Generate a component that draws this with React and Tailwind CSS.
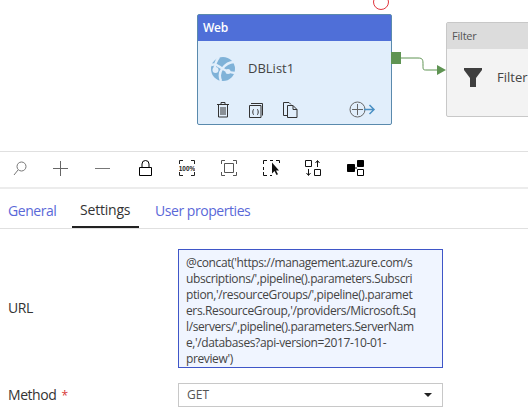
function Trash() {
  return <svg width="14" height="17" viewBox="0 0 14 17" fill="none" stroke="#333" strokeWidth="1"><path d="M1 3.500h12M5 3.500V1.500h4v2M2.500 3.500v12.500h9V3.500M5 6v8M7 6v8M9 6v8" /></svg>;
}
function Code() {
  return <svg width="15" height="16" viewBox="0 0 15 16" fill="none" stroke="#333" strokeWidth="1"><path d="M.5 3.500h11.500v12H.5zM2 1.500h11.500v12" /><path d="M5 7.500c-1 0-1 .5-1 1.500s-.5 1-.7 1c.2 0 .7 0 .7 1s0 1.500 1 1.500M8 7.500c1 0 1 .5 1 1.500s.5 1 .7 1c-.2 0-.7 0-.7 1s0 1.500-1 1.500" /></svg>;
}
function Copy() {
  return <svg width="15" height="16" viewBox="0 0 15 16" fill="none" stroke="#333" strokeWidth="1"><path d="M4 13.500H.5V.5h5.500l2 2" /><path d="M4.500 3.500h5.500l4 4v8H4.500zM10 3.500v4h4" /></svg>;
}
function AddArrow() {
  return <svg width="27" height="17" viewBox="0 0 27 17" fill="none"><circle cx="8.500" cy="8.500" r="7.500" stroke="#666" /><path d="M8.500 3v11M3 8.500h11" stroke="#666" /><path d="M15 8.500h10M20.500 4l4.500 4.500-4.500 4.500" stroke="#4a90c4" strokeWidth="1.500" /></svg>;
}
function Globe() {
  return <svg width="24" height="24" viewBox="0 0 24 24"><circle cx="12" cy="12" r="12" fill="#7fb2d8" /><path d="M0 8c6-2 8 2 12 4s6 4 12 4M8 0C5 4 3 9 4 14M23 5c-5 0-9 3-12 7s-3 7-1 12" stroke="#e1eefb" strokeWidth="2.400" fill="none" /><circle cx="4.500" cy="13" r="3" fill="#e1eefb" /><circle cx="17" cy="14.500" r="2.500" fill="#e1eefb" /></svg>;
}
const tools = [
  <svg className="ml-[2px]" width="14" height="15" viewBox="0 0 14 15" fill="none" stroke="#777"><circle cx="8.500" cy="5.500" r="4.500" /><path d="M5 9l-4 5" /></svg>,
  <svg width="15" height="15" viewBox="0 0 15 15" fill="none" stroke="#666"><path d="M7.500 0v15M0 7.500h15" /></svg>,
  <svg width="15" height="15" viewBox="0 0 15 15" fill="none" stroke="#777"><path d="M0 7.500h15" /></svg>,
  <svg className="ml-[2px]" width="13" height="16" viewBox="0 0 13 16" fill="none" stroke="#000"><path d="M.5 7.500h12v8H.5zM3 7.500V4a3.500 3.500 0 0 1 7 0v3.500" /></svg>,
  <svg width="16" height="16" viewBox="0 0 16 16" fill="none" stroke="#222"><path d="M.5 4V.5H4M12 .5h3.500V4M.5 12v3.500H4M12 15.500h3.500V12" /><text x="8" y="10.500" textAnchor="middle" fontSize="6.500" fontWeight="700" fill="#222" stroke="none" fontFamily="Liberation Sans">100%</text></svg>,
  <svg width="16" height="16" viewBox="0 0 16 16" fill="none" stroke="#555"><path d="M.5 4V.5H4M12 .5h3.500V4M.5 12v3.500H4M12 15.500h3.500V12" /><path d="M3.500 3.500h9v9h-9z" /></svg>,
  <svg width="17" height="16" viewBox="0 0 17 16" fill="none" stroke="#111"><path d="M.5 4V.5H4M7 .5h3M13 .5h3.500V3M.5 7v3M.5 12v3.500H4M7 15.500h2" strokeWidth="1" /><path d="M9 2.500v11l2.500-2.500 2 4 1.500-.8-2-3.800h3z" fill="#111" stroke="none" /></svg>,
  <svg width="16" height="16" viewBox="0 0 16 16" fill="none" stroke="#111"><path d="M.5.500h6v6h-6zM9.500 9.500h6v6h-6zM12.500 7V1M10.500 3l2-2.500 2 2.500M3.500 9v6M1.500 13l2 2.500 2-2.500" /></svg>,
  <svg width="17" height="16" viewBox="0 0 17 16" fill="none" stroke="#000"><path d="M.5 4.500h7v7h-7z" fill="#000" /><path d="M10.500.5h6v6h-6z" fill="#000" /><path d="M10.500 9.500h6v6h-6zM7 8h3" /></svg>,
];
const lines = [
  "@concat('https://management.azure.com/s",
  "ubscriptions/',pipeline().parameters.Subscri",
  "ption,'/resourceGroups/',pipeline().paramet",
  "ers.ResourceGroup,'/providers/Microsoft.Sq",
  "l/servers/',pipeline().parameters.ServerNam",
  "e,'/databases?api-version=2017-10-01-",
  "preview')",
];
export default function App() {
  return (
    <div className="w-[528px] h-[416px] overflow-hidden bg-white flex flex-col font-['Open_Sans',sans-serif] text-[#333]">
      <div className="relative h-[152px] shrink-0 border-b border-[#e0e0e0]">
        <div className="absolute left-[373px] top-[-6px] w-4 h-4 rounded-full border border-[#e0343c]" />
        <div className="absolute left-[197px] top-[14px] w-[195px] h-[111px] rounded-[2px] border border-[#5a8aad] bg-[#e1eefb] flex flex-col">
          <div className="h-[26px] bg-[#4f6fd8] text-white text-[12px] font-semibold flex items-center px-[5px] tracking-[-0.3px]">Web</div>
          <div className="flex items-center gap-[13px] pl-[13px] mt-[16px]">
            <Globe />
            <span className="text-[13px] text-[#444]">DBList1</span>
          </div>
          <div className="flex items-center pl-[18px] mt-auto mb-[6px]">
            <Trash />
            <div className="ml-[19px]"><Code /></div>
            <div className="ml-[19px]"><Copy /></div>
            <div className="ml-[51px]"><AddArrow /></div>
          </div>
        </div>
        <div className="absolute left-[446px] top-[22px] w-[100px] h-[95px] rounded-[2px] border border-[#c8c8c8] bg-[#f3f3f3] flex flex-col">
          <div className="h-[26px] bg-[#dcdcdc] text-[#555] text-[11px] flex items-center px-[5px] tracking-[-0.2px]">Filter</div>
          <div className="flex items-center gap-[15px] pl-[17px] mt-[19px]">
            <svg width="18" height="19" viewBox="0 0 18 19"><path d="M0 0h18v2l-6 8v9H6v-9L0 2z" fill="#3f3f3f" /></svg>
            <span className="text-[13px] text-[#444]">Filter</span>
          </div>
        </div>
        <div className="absolute left-[391px] top-[52px] w-[10px] h-[12px] bg-[#5f9453]" />
        <svg className="absolute left-[401px] top-[55px]" width="46" height="22" viewBox="0 0 46 22" fill="none">
          <path d="M0 3h17c5 0 5 2 5 7s0 5 4 5h11" stroke="#5f9453" />
          <path d="M36 10l9 5-9 5z" fill="#5f9453" />
        </svg>
      </div>
      <div className="h-[37px] shrink-0 border-b-2 border-[#ececec] flex items-center pl-[11px] pb-[3px]">
        {tools.map((t, i) => (
          <div key={i} className="w-[42px] flex items-center justify-start">{t}</div>
        ))}
      </div>
      <div className="h-[40px] shrink-0 border-b border-[#e0e0e0] flex text-[14px] tracking-[-0.45px]">
        <div className="pl-2 w-[72px] pt-[4px] flex items-center text-[#5a68d8]">General</div>
        <div className="w-[67px] pl-[8px] pt-[4px] flex items-center border-b-2 border-[#222] text-[#333] tracking-[-0.2px] h-[39px]">Settings</div>
        <div className="pl-[16px] pt-[4px] flex items-center text-[#5a68d8]">User properties</div>
      </div>
      <div className="flex items-center pl-2 mt-[20px]">
        <div className="w-[170px] text-[14px] tracking-[-0.45px] text-[#333] pb-[2px]">URL</div>
        <div className="w-[265px] h-[119px] border border-[#3f56c8] bg-[#f0f5ff] pl-[7px] pt-[5px] text-[12px] leading-[16px] text-[#444] tracking-[-0.38px] whitespace-nowrap overflow-hidden">
          {lines.map((l, i) => <div key={i}>{l}</div>)}
        </div>
      </div>
      <div className="flex items-center pl-2 mt-[15px]">
        <div className="w-[170px] text-[14px] tracking-[-0.45px] text-[#333] pb-[2px]">Method <span className="text-[12px] text-[#d83838] ml-[2px]">*</span></div>
        <div className="w-[265px] h-[24px] border border-[#c8c8c8] flex items-center justify-between pl-[8px] pr-[10px] text-[12px] text-[#555]">
          <span>GET</span>
          <span className="w-0 h-0 border-x-[4px] border-x-transparent border-t-[4px] border-t-[#222]" />
        </div>
      </div>
    </div>
  );
}
